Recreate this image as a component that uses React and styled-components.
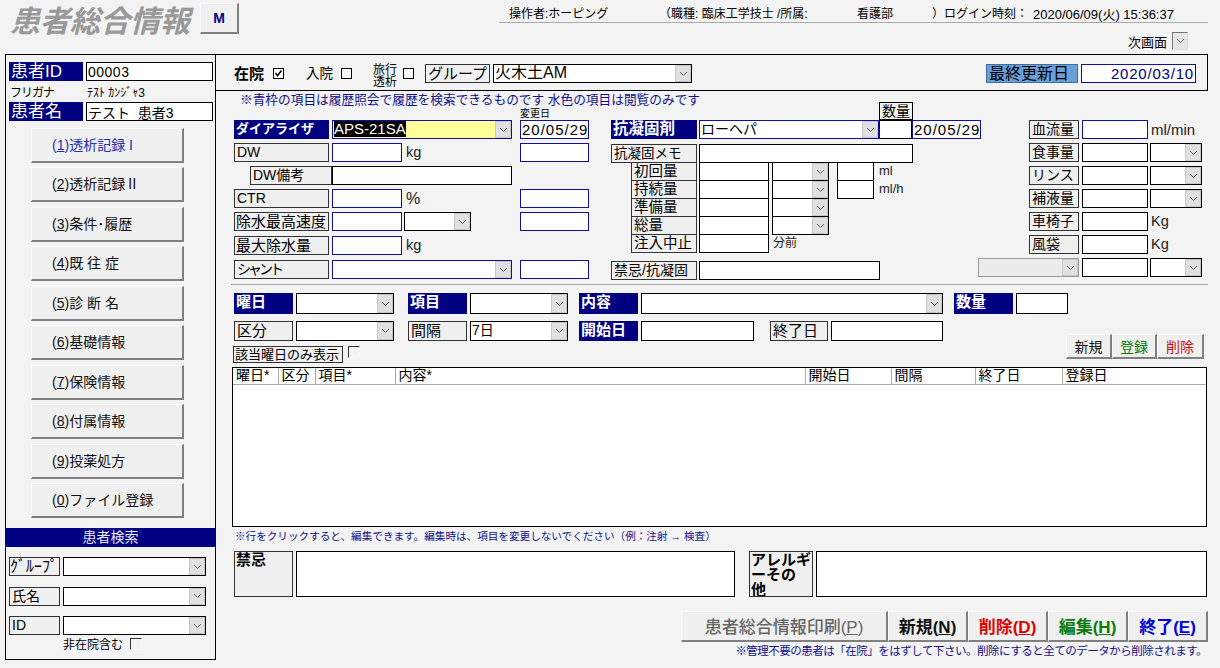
// App.jsx
import React from 'react';
import styled, { createGlobalStyle, css } from 'styled-components';

const FONT = '"Liberation Sans", "Noto Sans CJK JP", sans-serif';
const NAVY = '#000080';
const FIELD_BLUE = '#10109a';

const GlobalStyle = createGlobalStyle`
  html, body {
    margin: 0;
    background: #f3f3f3;
    font-family: ${FONT};
    color: #000;
  }
  * { box-sizing: border-box; }
`;

const Chevron = () => (
  <svg width="9" height="6" viewBox="0 0 9 6">
    <polyline points="1,1 4.5,4.5 8,1" fill="none" stroke="#666" strokeWidth="1" />
  </svg>
);

const Check = () => (
  <svg width="9" height="9" viewBox="0 0 9 9">
    <polyline points="1.5,4 3.5,6.8 7.5,1.5" fill="none" stroke="#000" strokeWidth="1.5" />
  </svg>
);

const Label = styled.div`
  flex: none;
  width: ${({ $w }) => $w}px;
  height: ${({ $h }) => $h || 19}px;
  margin-left: ${({ $ml }) => $ml || 0}px;
  margin-right: ${({ $mr }) => $mr || 0}px;
  padding: 0 ${({ $pad }) => $pad ?? 2}px;
  font-size: ${({ $size }) => $size || 14}px;
  letter-spacing: ${({ $ls }) => $ls || 0}px;
  line-height: ${({ $lh }) => $lh || 17}px;
  white-space: nowrap;
  overflow: hidden;
  ${({ $kind }) => {
    if ($kind === 'navy') return css`
      background: ${NAVY};
      color: #fff;
      font-weight: 700;
    `;
    if ($kind === 'id') return css`
      background: ${NAVY};
      color: #fff;
    `;
    if ($kind === 'sky') return css`
      background: #6a9fd8;
      border: 1px solid #3f6f9f;
    `;
    if ($kind === 'flat') return css`
      background: #f3f3f3;
      border: 1px solid #000;
    `;
    return css`
      background: #f0f0f0;
      border: 1px solid #333;
    `;
  }}
`;

const Field = styled.input.attrs({ readOnly: true })`
  flex: none;
  display: block;
  width: ${({ $w }) => $w}px;
  height: ${({ $h }) => $h || 19}px;
  padding: 0 1px;
  margin: 0 0 0 ${({ $ml }) => $ml || 0}px;
  border: 1px solid ${({ $blue }) => ($blue ? FIELD_BLUE : '#000')};
  border-radius: 0;
  outline: none;
  background: #fff;
  font-family: ${FONT};
  font-size: ${({ $size }) => $size || 14}px;
  letter-spacing: ${({ $ls }) => $ls || 0}px;
  color: ${({ $color }) => $color || '#000'};
  text-align: ${({ $right }) => ($right ? 'right' : 'left')};
`;

const SelectBox = styled.div`
  flex: none;
  display: flex;
  width: ${({ $w }) => $w}px;
  height: ${({ $h }) => $h || 19}px;
  margin-left: ${({ $ml }) => $ml || 0}px;
  border: 1px solid ${({ $blue, $line }) => $line || ($blue ? FIELD_BLUE : '#000')};
  background: ${({ $bg }) => $bg || '#fff'};
  font-size: ${({ $size }) => $size || 14}px;
  line-height: 16px;
`;

const SelectValue = styled.div`
  flex: 1;
  min-width: 0;
  padding-left: 1px;
  white-space: nowrap;
  overflow: hidden;
`;

const Selected = styled.span`
  background: #000;
  color: #fff;
  font-size: 15px;
`;

const SelectArrow = styled.div`
  flex: none;
  width: 16px;
  display: flex;
  align-items: center;
  justify-content: center;
  background: #e0e0e0;
  border: 1px solid #c8c8c8;
`;

const Select = ({ value, children, ...rest }) => (
  <SelectBox {...rest}>
    <SelectValue>{children || value}</SelectValue>
    <SelectArrow>
      <Chevron />
    </SelectArrow>
  </SelectBox>
);

const CheckBox = styled.span`
  flex: none;
  display: inline-flex;
  align-items: center;
  justify-content: center;
  width: 11px;
  height: 11px;
  border: 1px solid #000;
  background: #fff;
  ${({ $sunken }) => $sunken && css`
    width: 12px;
    height: 12px;
    border-color: #333 #f8f8f8 #f8f8f8 #333;
    background: #f3f3f3;
  `}
`;

const Unit = styled.span`
  flex: none;
  margin-left: ${({ $ml }) => $ml || 0}px;
  font-size: ${({ $size }) => $size || 14.5}px;
  line-height: 19px;
  color: #222;
`;

const raised = css`
  background: #f0f0f0;
  border-style: solid;
  border-width: 1px 2px 2px 1px;
  border-color: #fbfbfb #808080 #808080 #fbfbfb;
  font-family: ${FONT};
  padding: 0;
  cursor: default;
`;

// header

const Page = styled.div`
  width: 1220px;
  height: 668px;
  overflow: hidden;
`;

const Header = styled.header`
  display: flex;
  height: 54px;
  padding-left: 10px;
`;

const Title = styled.h1`
  width: 190px;
  margin: 4px 0 0;
  font-size: 30px;
  line-height: 36px;
  font-weight: 700;
  font-style: italic;
  color: #999;
  white-space: nowrap;
`;

const MButton = styled.button`
  ${raised}
  width: 39px;
  height: 31px;
  margin-top: 3px;
  color: ${NAVY};
  font-size: 14px;
  font-weight: 700;
`;

const HeaderRight = styled.div`
  width: 709px;
  margin-left: auto;
  margin-right: 12px;
`;

const InfoBar = styled.div`
  display: flex;
  height: 23px;
  padding-top: 7px;
  border-bottom: 1px solid #aaa;
  font-size: 12px;
  line-height: 15px;
  white-space: nowrap;
`;

const InfoItem = styled.span`
  width: ${({ $w }) => $w}px;
  flex: none;
  font-size: ${({ $size }) => $size || 12}px;
`;

const NextScreen = styled.div`
  display: flex;
  justify-content: flex-end;
  align-items: center;
  gap: 5px;
  height: 20px;
  margin-top: 8px;
  padding-right: 20px;
  font-size: 13px;
`;

const NextBox = styled.span`
  display: flex;
  align-items: center;
  justify-content: center;
  width: 16px;
  height: 18px;
  background: #e6e6e6;
  border: 1px solid;
  border-color: #777 #ddd #ddd #777;
`;

// sidebar

const Main = styled.main`
  display: flex;
  padding-left: 5px;
`;

const Sidebar = styled.aside`
  flex: none;
  width: 211px;
  height: 606px;
  padding: 7px 1px 0 3px;
  border: 1px solid #000;
`;

const IdentityRow = styled.div`
  display: flex;
  gap: 3px;
  height: 19px;
  margin-bottom: ${({ $mb }) => $mb || 0}px;
`;

const KanaLabel = styled.div`
  width: 74px;
  font-size: 12px;
  letter-spacing: -1px;
  line-height: 20px;
  padding-left: 1px;
`;

const KanaValue = styled.div`
  font-size: 12px;
  line-height: 20px;
  padding-left: 1px;
  white-space: nowrap;
`;

const NavList = styled.nav`
  display: flex;
  flex-direction: column;
  justify-content: space-between;
  width: 153px;
  height: 390px;
  margin: 7px 0 10px 22px;
`;

const NavButton = styled.button`
  ${raised}
  height: 35px;
  padding: 0 0 2px 20px;
  font-size: 14px;
  text-align: left;
  color: ${({ $active }) => ($active ? '#2230b0' : '#111')};
  white-space: pre;
`;

const SearchTitle = styled.div`
  height: 19px;
  margin: 0 -2px 0 -4px;
  background: ${NAVY};
  color: #e8e8f8;
  font-size: 14px;
  line-height: 19px;
  text-align: center;
`;

const SearchList = styled.div`
  display: flex;
  flex-direction: column;
  gap: 10.5px;
  margin: 10px 0 0 0;
`;

const SearchRow = styled.div`
  display: flex;
  gap: 3px;
`;

const ExcludeRow = styled.div`
  display: flex;
  align-items: center;
  gap: 7px;
  height: 15px;
  margin: 1px 0 0 54px;
  font-size: 12px;
`;

// content

const Content = styled.section`
  flex: none;
  width: 992px;
`;

const StatusBar = styled.div`
  display: flex;
  align-items: center;
  height: 37px;
  padding: 2px 0 0 18px;
  border: 1px solid #000;
  border-left: 0;
`;

const StatusItem = styled.div`
  display: flex;
  align-items: center;
  flex: none;
  width: ${({ $w }) => $w}px;
  gap: ${({ $gap }) => $gap || 8}px;
`;

const StatusText = styled.span`
  margin-top: -3px;
  font-size: ${({ $size }) => $size || 13.5}px;
  font-weight: ${({ $bold }) => ($bold ? 700 : 400)};
`;

const Stacked = styled.span`
  margin-top: 4px;
  font-size: 12px;
  line-height: 12px;
  width: 24px;
`;

const StatusEnd = styled.div`
  display: flex;
  gap: 3px;
  margin-left: auto;
  margin-right: 11px;
`;

const FormHead = styled.div`
  display: grid;
  grid-template-columns: 304px 359px 1fr;
  grid-template-rows: 17px 12px;
`;

const Notice = styled.div`
  grid-column: 1 / 3;
  grid-row: 1;
  padding: 2px 0 0 24px;
  font-size: 12.7px;
  line-height: 15px;
  color: #10108c;
  white-space: nowrap;
`;

const ChangedHead = styled.div`
  grid-column: 1;
  grid-row: 2;
  padding-left: 304px;
  font-size: 10px;
  line-height: 12px;
  white-space: nowrap;
`;

const AmountHead = styled.div`
  grid-column: 3;
  grid-row: 1 / 3;
  align-self: end;
`;

const Form = styled.div`
  display: flex;
  height: 164px;
  padding-left: 18px;
`;

const LeftGrid = styled.div`
  flex: none;
  display: grid;
  width: 377px;
  grid-template-columns: 98px 72px 116px 69px;
  grid-template-rows: 23px 23px 23px 23px 24px 24px 19px;
`;

const Cell = styled.div`
  display: flex;
  grid-column: ${({ $col }) => $col || 'auto'};
  justify-content: ${({ $end }) => ($end ? 'flex-end' : 'flex-start')};
  gap: 4px;
  height: 19px;
`;

const MidColumn = styled.div`
  flex: none;
  width: 367px;
`;

const MidRow = styled.div`
  display: flex;
  gap: ${({ $gap }) => $gap ?? 2}px;
  height: ${({ $h }) => $h || 19}px;
  margin-top: ${({ $mt }) => $mt || 0}px;
  padding-left: ${({ $pl }) => $pl || 0}px;
`;

const DoseUnit = styled(Unit)`
  line-height: 17px;
  font-size: 13px;
`;

const RightColumn = styled.div`
  flex: none;
  width: 224px;
  display: flex;
  flex-direction: column;
  gap: 4px;
`;

const RightRow = styled.div`
  display: flex;
  gap: 3px;
  height: 19px;
  padding-left: ${({ $pl }) => $pl ?? 51}px;
`;

const RowDivider = styled.hr`
  height: 1px;
  margin: 0 0 8px 15px;
  border: 0;
  background: #aaa;
`;

const Lower = styled.div`
  display: grid;
  grid-template-columns: 62px 112px 62px 109px 62px 313px 62px 1fr;
  grid-template-rows: 28px 25px 21px;
  padding-left: 18px;
`;

const SplitCell = styled.div`
  display: flex;
  width: 302px;
`;

const DayOnly = styled.div`
  grid-column: 1 / 7;
  grid-row: 3;
  display: flex;
  gap: 5px;
  align-items: flex-start;
  margin-left: -1px;
`;

const SmallButtons = styled.div`
  grid-column: 7 / 9;
  grid-row: 2 / 4;
  justify-self: end;
  display: flex;
  height: 25px;
  margin: 13px 4px 0 0;
`;

const SmallButton = styled.button`
  ${raised}
  width: ${({ $w }) => $w || 46}px;
  font-size: 14px;
  color: ${({ $color }) => $color || '#111'};
`;

const ListFrame = styled.div`
  width: 975px;
  height: 160px;
  margin-left: 16px;
  border: 1px solid #000;
  background: #fff;
`;

const ListTable = styled.table`
  width: 100%;
  table-layout: fixed;
  border-collapse: collapse;
`;

const HeadCell = styled.th`
  width: ${({ $w }) => ($w ? `${$w}px` : 'auto')};
  height: 16px;
  padding: 0 0 0 3px;
  border-right: 1px solid #aaa;
  border-bottom: 1px solid #aaa;
  font-size: 14px;
  line-height: 15px;
  font-weight: 400;
  text-align: left;
  white-space: nowrap;
  &:last-child { border-right: 0; }
`;

const ListHint = styled.div`
  height: 24px;
  padding: 2px 0 0 19px;
  font-size: 10.6px;
  line-height: 15px;
  color: #10108c;
`;

const MemoRow = styled.div`
  display: flex;
  height: 46px;
  padding-left: 18px;
`;

const MemoLabel = styled(Label)`
  font-weight: 700;
  line-height: ${({ $lh }) => $lh || 16}px;
  white-space: normal;
  padding: 0 1px;
`;

const MemoField = styled.textarea.attrs({ readOnly: true })`
  flex: none;
  width: ${({ $w }) => $w}px;
  height: 46px;
  margin: 0 0 0 3px;
  border: 1px solid #000;
  border-radius: 0;
  outline: none;
  resize: none;
  background: #fff;
`;

const ActionBar = styled.div`
  display: flex;
  justify-content: flex-end;
  height: 31px;
  margin-top: 14px;
`;

const ActionButton = styled.button`
  ${raised}
  width: ${({ $w }) => $w || 80}px;
  padding-bottom: 2px;
  font-size: 17px;
  font-weight: ${({ $bold }) => ($bold ? 700 : 500)};
  color: ${({ $color }) => $color};
  white-space: nowrap;
`;

const FootNote = styled.div`
  height: 16px;
  padding-right: 1px;
  margin-top: 1px;
  font-size: 11.5px;
  letter-spacing: -0.5px;
  line-height: 16px;
  color: #10108c;
  text-align: right;
  white-space: nowrap;
`;

const navItems = [
  ['1', '透析記録 I'],
  ['2', '透析記録Ⅱ'],
  ['3', '条件･履歴'],
  ['4', '既 往 症'],
  ['5', '診 断 名'],
  ['6', '基礎情報'],
  ['7', '保険情報'],
  ['8', '付属情報'],
  ['9', '投薬処方'],
  ['0', 'ファイル登録'],
];

const doseRows = ['初回量', '持続量', '準備量', '総量', '注入中止'];

const columns = [
  ['曜日*', 45], ['区分', 37], ['項目*', 80], ['内容*', 410],
  ['開始日', 86], ['間隔', 84], ['終了日', 87], ['登録日', 0],
];

const Key = ({ k }) => (
  <>
    (<u>{k}</u>)
  </>
);

const App = () => (
  <Page>
    <GlobalStyle />
    <Header>
      <Title>患者総合情報</Title>
      <MButton>M</MButton>
      <HeaderRight>
        <InfoBar>
          <InfoItem $w={10} />
          <InfoItem $w={150}>操作者:ホーピング</InfoItem>
          <InfoItem $w={198}>（職種: 臨床工学技士 /所属:</InfoItem>
          <InfoItem $w={75}>看護部</InfoItem>
          <InfoItem $w={101}>）ログイン時刻：</InfoItem>
          <InfoItem $w={150} $size={13}>2020/06/09(火) 15:36:37</InfoItem>
        </InfoBar>
        <NextScreen>
          次画面
          <NextBox>
            <Chevron />
          </NextBox>
        </NextScreen>
      </HeaderRight>
    </Header>

    <Main>
      <Sidebar>
        <IdentityRow $mb={2}>
          <Label $kind="id" $w={74} $size={17} $lh={19}>患者ID</Label>
          <Field $w={127} $ls={0.5} value="00003" />
        </IdentityRow>
        <IdentityRow>
          <KanaLabel>フリガナ</KanaLabel>
          <KanaValue>ﾃｽﾄ ｶﾝｼﾞｬ3</KanaValue>
        </IdentityRow>
        <IdentityRow>
          <Label $kind="id" $w={74} $size={17} $lh={19}>患者名</Label>
          <Field $w={127} value="テスト  患者3" />
        </IdentityRow>
        <NavList>
          {navItems.map(([k, text], i) => (
            <NavButton key={k} $active={i === 0}>
              <Key k={k} />
              {text}
            </NavButton>
          ))}
        </NavList>
        <SearchTitle>患者検索</SearchTitle>
        <SearchList>
          <SearchRow>
            <Label $w={51} $size={16} $pad={0}>ｸﾞﾙｰﾌﾟ</Label>
            <Select $w={143} />
          </SearchRow>
          <SearchRow>
            <Label $w={51}>氏名</Label>
            <Select $w={143} />
          </SearchRow>
          <SearchRow>
            <Label $w={51}>ID</Label>
            <Select $w={143} />
          </SearchRow>
        </SearchList>
        <ExcludeRow>
          非在院含む
          <CheckBox $sunken />
        </ExcludeRow>
      </Sidebar>

      <Content>
        <StatusBar>
          <StatusItem $w={72} $gap={9}>
            <StatusText $bold $size={15}>在院</StatusText>
            <CheckBox>
              <Check />
            </CheckBox>
          </StatusItem>
          <StatusItem $w={67}>
            <StatusText>入院</StatusText>
            <CheckBox />
          </StatusItem>
          <StatusItem $w={52} $gap={6}>
            <Stacked>旅行透析</Stacked>
            <CheckBox />
          </StatusItem>
          <Label $w={65} $size={15}>グループ</Label>
          <Select $w={199} $ml={3} $size={16} value="火木土AM" />
          <StatusEnd>
            <Label $kind="sky" $w={92} $size={16}>最終更新日</Label>
            <Field $w={115} $blue $right $size={15} $ls={0.8} $color="#000080" value="2020/03/10" />
          </StatusEnd>
        </StatusBar>

        <FormHead>
          <Notice>※青枠の項目は履歴照会で履歴を検索できるものです 水色の項目は閲覧のみです</Notice>
          <ChangedHead>変更日</ChangedHead>
          <AmountHead>
            <Label $kind="flat" $w={34} $h={18}>数量</Label>
          </AmountHead>
        </FormHead>

        <Form>
          <LeftGrid>
            <Label $kind="navy" $w={95} $size={13}>ダイアライザ</Label>
            <Cell $col="2 / 4">
              <Select $w={180} $blue $bg="#ffff99">
                <Selected>APS-21SA</Selected>
              </Select>
            </Cell>
            <Field $w={69} $blue $size={15} $ls={1} value="20/05/29" />

            <Label $w={95}>DW</Label>
            <Cell>
              <Field $w={70} $blue />
            </Cell>
            <Cell>
              <Unit $ml={2}>kg</Unit>
            </Cell>
            <Field $w={69} $blue />

            <Cell $end>
              <Label $w={82}>DW備考</Label>
            </Cell>
            <Cell $col="2 / 5">
              <Field $w={180} />
            </Cell>

            <Label $w={95}>CTR</Label>
            <Cell>
              <Field $w={70} $blue />
            </Cell>
            <Cell>
              <Unit $ml={2} $size={16}>%</Unit>
            </Cell>
            <Field $w={69} $blue />

            <Label $w={95} $size={15} $pad={1}>除水最高速度</Label>
            <Cell>
              <Field $w={70} $blue />
            </Cell>
            <Cell>
              <Select $w={67} />
            </Cell>
            <Field $w={69} $blue />

            <Label $w={95} $size={15} $pad={1}>最大除水量</Label>
            <Cell>
              <Field $w={70} $blue />
            </Cell>
            <Cell $col="3 / 5">
              <Unit $ml={2}>kg</Unit>
            </Cell>

            <Label $w={95} $ls={-3}>シャント</Label>
            <Cell $col="2 / 4">
              <Select $w={180} $blue />
            </Cell>
            <Field $w={69} $blue />
          </LeftGrid>

          <MidColumn>
            <MidRow $gap={0}>
              <Label $kind="navy" $w={86} $mr={2} $size={15.5}>抗凝固剤</Label>
              <Select $w={180} $blue value="ローヘパ" />
              <Field $w={33} />
              <Field $w={69} $blue $size={15} $ls={1} value="20/05/29" />
            </MidRow>
            <MidRow $mt={5} $h={18}>
              <Label $w={86} $size={13.5}>抗凝固メモ</Label>
              <Field $w={214} />
            </MidRow>
            {doseRows.map((name, i) => (
              <MidRow key={name} $pl={20} $h={18}>
                <Label $w={66} $size={14.5}>{name}</Label>
                <Field $w={70} />
                {i < 4 ? <Select $w={57} $ml={1} /> : <Unit $ml={2} $size={12}>分前</Unit>}
                {i < 2 && <Field $w={37} $ml={6} />}
                {i < 2 && <DoseUnit $ml={3}>{i === 0 ? 'ml' : 'ml/h'}</DoseUnit>}
              </MidRow>
            ))}
            <MidRow $mt={9} $h={18}>
              <Label $w={86}>禁忌/抗凝固</Label>
              <Field $w={181} />
            </MidRow>
          </MidColumn>

          <RightColumn>
            <RightRow>
              <Label $w={50}>血流量</Label>
              <Field $w={66} $blue />
              <Unit $size={15}>ml/min</Unit>
            </RightRow>
            {['食事量', 'リンス', '補液量'].map((name) => (
              <RightRow key={name}>
                <Label $w={50}>{name}</Label>
                <Field $w={66} />
                <Select $w={52} $ml={-1} />
              </RightRow>
            ))}
            {['車椅子', '風袋'].map((name) => (
              <RightRow key={name}>
                <Label $w={50}>{name}</Label>
                <Field $w={66} />
                <Unit>Kg</Unit>
              </RightRow>
            ))}
            <RightRow $pl={0}>
              <Select $w={101} $bg="#ececec" $line="#999" />
              <Field $w={66} />
              <Select $w={52} $ml={-1} />
            </RightRow>
          </RightColumn>
        </Form>

        <RowDivider />

        <Lower>
          <Label $kind="navy" $w={59} $h={21} $size={15}>曜日</Label>
          <Select $w={98} $h={21} />
          <Label $kind="navy" $w={59} $h={21} $size={15}>項目</Label>
          <Select $w={98} $h={21} />
          <Label $kind="navy" $w={59} $h={21} $size={15}>内容</Label>
          <Select $w={302} $h={21} />
          <Label $kind="navy" $w={59} $h={21} $size={15}>数量</Label>
          <Field $w={52} $h={21} />

          <Label $w={59} $h={20} $size={15}>区分</Label>
          <Select $w={98} $h={20} />
          <Label $w={59} $h={20} $size={15}>間隔</Label>
          <Select $w={98} $h={20} value="7日" />
          <Label $kind="navy" $w={59} $h={20} $size={15}>開始日</Label>
          <SplitCell>
            <Field $w={113} $h={20} />
            <Label $w={58} $h={20} $ml={16} $mr={3} $size={15}>終了日</Label>
            <Field $w={112} $h={20} />
          </SplitCell>

          <DayOnly>
            <Label $w={110} $h={17} $size={13} $lh={15} $pad={1}>該当曜日のみ表示</Label>
            <CheckBox $sunken />
          </DayOnly>
          <SmallButtons>
            <SmallButton>新規</SmallButton>
            <SmallButton $w={45} $color="#0a7a0a">登録</SmallButton>
            <SmallButton $w={47} $color="#d01010">削除</SmallButton>
          </SmallButtons>
        </Lower>

        <ListFrame>
          <ListTable>
            <thead>
              <tr>
                {columns.map(([name, w]) => (
                  <HeadCell key={name} $w={w}>{name}</HeadCell>
                ))}
              </tr>
            </thead>
          </ListTable>
        </ListFrame>
        <ListHint>※行をクリックすると、編集できます。編集時は、項目を変更しないでください（例：注射 → 検査）</ListHint>

        <MemoRow>
          <MemoLabel $w={59} $h={46} $size={15}>禁忌</MemoLabel>
          <MemoField $w={439} />
          <MemoLabel $w={64} $h={46} $ml={14} $size={15} $lh={15}>
            アレルギ<br />ーその<br />他
          </MemoLabel>
          <MemoField $w={391} />
        </MemoRow>

        <ActionBar>
          <ActionButton $w={207} $color="#666">患者総合情報印刷(<u>P</u>)</ActionButton>
          <ActionButton $bold $color="#111">新規(<u>N</u>)</ActionButton>
          <ActionButton $bold $color="#e00000">削除(<u>D</u>)</ActionButton>
          <ActionButton $bold $color="#0a7a0a">編集(<u>H</u>)</ActionButton>
          <ActionButton $bold $color="#0000d8">終了(<u>E</u>)</ActionButton>
        </ActionBar>
        <FootNote>※管理不要の患者は「在院」をはずして下さい。削除にすると全てのデータから削除されます。</FootNote>
      </Content>
    </Main>
  </Page>
);

export default App;
